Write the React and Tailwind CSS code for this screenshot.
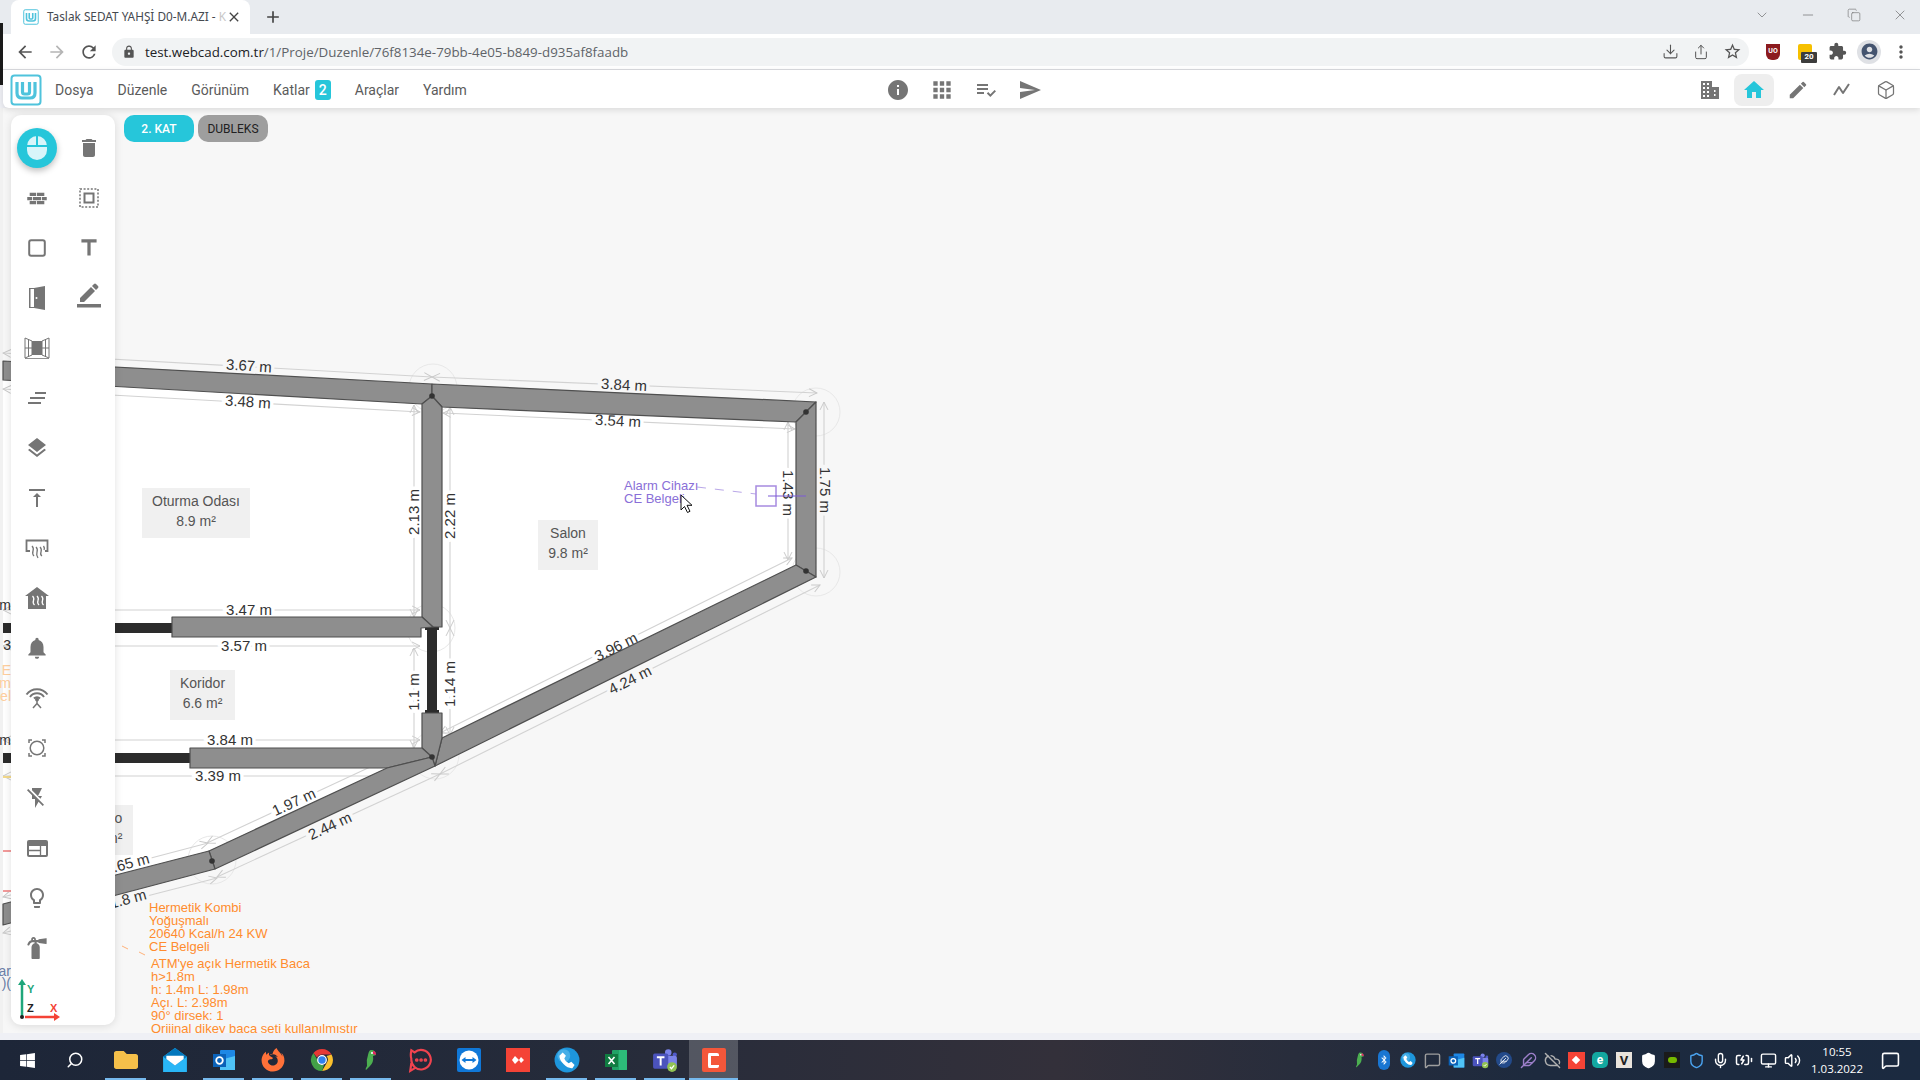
import React from 'react'
import {
  MdDelete, MdTitle, MdLayers, MdVerticalAlignTop, MdNotifications, MdFlashOff,
  MdLightbulbOutline, MdInfo, MdApps, MdPlaylistAddCheck, MdSend, MdHome, MdEdit,
  MdMoreVert, MdStarBorder, MdArrowBack, MdArrowForward, MdRefresh, MdLock, MdClose, MdAdd,
  MdExtension, MdAccountCircle,
} from 'react-icons/md'
import { FaFireExtinguisher, FaWindows, FaBluetoothB, FaSkype, FaFirefoxBrowser, FaFolder } from 'react-icons/fa'
import { Mic, Volume2, BatteryCharging, Monitor, Search, MessageSquare, ChevronDown, Minus, X, Copy, Box, Share, Download, Feather, CloudOff, Shield } from 'lucide-react'

const G = '#757575'

const Logo = ({ size = 32 }) => (
  <svg width={size} height={size} viewBox="0 0 32 32" fill="none">
    <rect x="1.5" y="1.5" width="29" height="29" rx="3" stroke="#4fc3dc" strokeWidth="2" fill="#fff" />
    <path d="M7 8v11q0 5 5 5h8q5 0 5-5V8M12.5 8v10q0 2 2 2h3q2 0 2-2V8" stroke="#4fc3dc" strokeWidth="3.2" />
  </svg>
)

// ---- sidebar icons
const MouseIcon = () => (
  <svg width="22" height="26" viewBox="0 0 22 26">
    <rect x="1" y="1" width="20" height="24" rx="10" fill="#d8f5fa" />
    <path d="M1 11h20M11 1v10" stroke="#26c6da" strokeWidth="2" />
  </svg>
)
const Brick = () => (
  <svg width="24" height="13" viewBox="0 0 24 16" fill={G}>
    <path d="M3 1h8v4H3zM12 1h9v4h-9zM0 6h6v4H0zM7 6h10v4H7zM18 6h6v4h-6zM3 11h8v4H3zM12 11h9v4h-9z" />
  </svg>
)
const SelectBox = () => (
  <svg width="20" height="20" viewBox="0 0 20 20" fill="none">
    <rect x="1" y="1" width="18" height="18" stroke={G} strokeWidth="1.5" strokeDasharray="2 1.6" />
    <rect x="5.5" y="5.5" width="9" height="9" stroke={G} strokeWidth="2" />
  </svg>
)
const Square = () => (
  <svg width="18" height="18" viewBox="0 0 18 18" fill="none">
    <rect x="1.2" y="1.2" width="15.6" height="15.6" rx="2" stroke={G} strokeWidth="2" />
  </svg>
)
const Door = () => (
  <svg width="16" height="24" viewBox="0 0 16 24" fill={G}>
    <path d="M0 2h6v1H1.500v18H6v1H0z" />
    <path d="M5 2l11-2v24L5 22z" />
    <circle cx="7.500" cy="12" r="1" fill="#fff" />
  </svg>
)
const PenLine = () => (
  <svg width="26" height="26" viewBox="0 0 26 26" fill={G} className="mb-[7px]">
    <path d="M4 16L15 5l4 4L8 20H4zM16 4l2-2q1-1 2 0l2 2q1 1 0 2l-2 2z" />
    <rect x="1" y="22" width="24" height="3.500" />
  </svg>
)
const WindowIcon = () => (
  <svg width="26" height="24" viewBox="0 0 26 24" fill="none" stroke={G} strokeWidth="1">
    <path d="M1 2l7 3v14l-7 3zM25 2l-7 3v14l7 3zM4.500 3.500v17M21.500 3.500v17M1 12h7M18 12h7" />
    <rect x="8" y="5" width="10" height="14" fill={G} stroke="none" />
    <path d="M1 22.500h24" strokeWidth="0.8" />
  </svg>
)
const Lines = () => (
  <svg width="20" height="14" viewBox="0 0 20 14" fill="none" stroke={G} strokeWidth="1.800">
    <path d="M8 2h11M3 7h15M1 12h13" />
  </svg>
)
const Radiator = () => (
  <svg width="24" height="22" viewBox="0 0 24 22" fill="none" stroke={G} className="mt-[4px]">
    <path d="M5 12H1.500V1.500h21V12H20" strokeWidth="1.800" />
    <path d="M7 7q2 2 1 5t1 5M11 8q2 2 1 5t1 6M15 8q2 2 1 5t1 4M18.500 7q1.500 2 .5 4" strokeWidth="1.300" />
  </svg>
)
const HeatHouse = () => (
  <svg width="26" height="24" viewBox="0 0 26 24">
    <path d="M13 1L1 10h3v13h18V10h3z" fill={G} />
    <path d="M8.500 10q2 2 1 4.500t1 4.500M13 10q2 2 1 4.500t1 4.500M17.500 10q2 2 1 4.500t1 4.500" fill="none" stroke="#fff" strokeWidth="1.300" />
  </svg>
)
const Antenna = () => (
  <svg width="24" height="24" viewBox="0 0 24 24" fill="none" stroke={G} strokeWidth="2" className="mb-[2px]">
    <path d="M1.500 9.500a13 13 0 0 1 21 0M5 12a8.500 8.500 0 0 1 14 0" />
    <path d="M9 13.500a4 4 0 0 1 6 0" />
    <circle cx="12" cy="14.500" r="2" fill={G} stroke="none" />
    <path d="M12 15v4M12 18.500l-4 4.500M12 18.500l4 4.500" strokeWidth="1.500" />
  </svg>
)
const RingCorners = () => (
  <svg width="18" height="18" viewBox="0 0 18 18" fill="none" stroke={G}>
    <circle cx="9" cy="9" r="6.800" strokeWidth="1.500" />
    <path d="M1 4V1h3M14 1h3v3M17 14v3h-3M4 17H1v-3" strokeWidth="1.500" />
  </svg>
)
const Panel = () => (
  <svg width="21" height="17" viewBox="0 0 21 17">
    <rect width="21" height="17" rx="2" fill={G} />
    <path d="M2 6h17v9H2z" fill="#fff" />
    <path d="M13.500 6v9M2 10.500h11.500" stroke={G} strokeWidth="1.300" />
  </svg>
)

const sideRows = [
  [<MouseIcon />, <MdDelete size={24} color={G} />],
  [<Brick />, <SelectBox />],
  [<Square />, <MdTitle size={26} color={G} />],
  [<Door />, <PenLine />],
  [<WindowIcon />],
  [<Lines />],
  [<MdLayers size={24} color={G} />],
  [<MdVerticalAlignTop size={24} color={G} />],
  [<Radiator />],
  [<HeatHouse />],
  [<MdNotifications size={26} color={G} />],
  [<Antenna />],
  [<RingCorners />],
  [<MdFlashOff size={24} color={G} />],
  [<Panel />],
  [<MdLightbulbOutline size={24} color={G} />],
  [<FaFireExtinguisher size={22} color={G} />],
]

const Sidebar = () => (
  <div className="absolute left-[11px] top-[7px] z-10 flex h-[910px] w-[104px] flex-col rounded-[10px] bg-white pt-[8px] shadow-[0_1px_8px_rgba(0,0,0,0.12)]">
    {sideRows.map((row, i) => (
      <div key={i} className="grid h-[50px] w-full shrink-0 grid-cols-[52px_52px] items-center">
        {row.map((icon, k) => (
          <div
            key={k}
            className={i === 0 && k === 0
              ? 'ml-[6px] flex h-10 w-10 items-center justify-center rounded-full bg-[#26c6da] shadow-[0_3px_6px_rgba(0,0,0,0.25)]'
              : 'flex items-center justify-center'}
          >
            {icon}
          </div>
        ))}
      </div>
    ))}
    <svg width="60" height="50" viewBox="0 0 60 50" className="mt-auto mb-[1px] ml-[3px] font-['Liberation_Sans',sans-serif]">
      <path d="M8 43V8" stroke="#1fa67a" strokeWidth="2.500" />
      <path d="M4 11l4-6 4 6z" fill="#1fa67a" />
      <path d="M11 43h30" stroke="#f44336" strokeWidth="2.500" />
      <path d="M40 39l6 4-6 4z" fill="#f44336" />
      <circle cx="8" cy="43" r="2" fill="#222" />
      <text x="13" y="19" fontSize="11" fontWeight="700" fill="#1fa67a">Y</text>
      <text x="13" y="38" fontSize="11" fontWeight="700" fill="#222">Z</text>
      <text x="36" y="38" fontSize="11" fontWeight="700" fill="#f44336">X</text>
    </svg>
  </div>
)

// ---- floor plan data
const walls = [
  '3,361 432,384 432,396 422,404 3,380',
  '432,384 816,402 796,422 442,407 432,396',
  '816,402 816,577 796,565 796,422',
  '816,577 435,766 442,738 796,565',
  '422,404 432,396 442,407 442,627 433,627 422,617',
  '172,617 422,617 433,627 421,628 421,637 172,637',
  '422,713 442,713 442,738 435,766 432,757 422,748',
  '190,748 422,748 432,757 387,768 190,768',
  '435,766 215,869 209,851 387,768 432,757',
  '215,869 3,925 3,904 209,851',
]
const dimLines = [
  [3, 353, 432, 377], [432, 377, 817, 393], [3, 389, 420, 412], [443, 413, 795, 429],
  [414, 405, 414, 617], [450, 407, 450, 628], [788, 422, 788, 560], [824, 402, 824, 578],
  [3, 610, 420, 610], [3, 646, 420, 646], [3, 740, 420, 740], [3, 776, 387, 776],
  [414, 648, 414, 748], [450, 628, 450, 735], [792, 558, 440, 733], [820, 585, 440, 774],
  [383, 761, 207, 843], [440, 774, 217, 877], [208, 843, 3, 897], [217, 878, 3, 933],
]
const dims = [
  ['3.67 m', 249, 366, 3.5, '#f7f7f7'], ['3.48 m', 248, 402, 3.5, '#fff'],
  ['3.84 m', 624, 385, 3, '#f7f7f7'], ['3.54 m', 618, 421, 3, '#fff'],
  ['2.13 m', 414, 512, -90, '#fff'], ['2.22 m', 450, 516, -90, '#fff'],
  ['1.43 m', 788, 493, 90, '#fff'], ['1.75 m', 825, 490, 90, '#f7f7f7'],
  ['3.47 m', 249, 610, 0, '#fff'], ['3.57 m', 244, 646, 0, '#fff'],
  ['3.84 m', 230, 740, 0, '#fff'], ['3.39 m', 218, 776, 0, '#fff'],
  ['1.1 m', 414, 692, -90, '#fff'], ['1.14 m', 450, 684, -90, '#fff'],
  ['3.96 m', 616, 647, -26.500, '#fff'], ['4.24 m', 630, 680, -26.500, '#f7f7f7'],
  ['1.97 m', 294, 802, -25, '#fff'], ['2.44 m', 330, 826, -25, '#f7f7f7'],
  ['1.65 m', 127, 864, -15, '#fff'], ['1.8 m', 128, 899, -15, '#f7f7f7'],
]
const rooms = [
  [142, 488, 108, 50, 'Oturma Odası', '8.9 m²'],
  [538, 520, 60, 50, 'Salon', '9.8 m²'],
  [170, 670, 65, 50, 'Koridor', '6.6 m²'],
  [72, 805, 61, 50, 'Banyo', '3.6 m²'],
]
const joints = [[432, 396], [806, 412], [806, 571], [432, 757], [212, 861]]
const kombi = ['Hermetik Kombi', 'Yoğuşmalı', '20640 Kcal/h 24 KW', 'CE Belgeli']
const baca = ["ATM'ye açık Hermetik Baca", 'h>1.8m', 'h: 1.4m L: 1.98m', 'Açı. L: 2.98m', '90° dirsek: 1', 'Orijinal dikey baca seti kullanılmıştır']
// bits of the drawing that stick out left of the tool panel
const leftBits = [
  ['m', 610, '#333'], ['3', 650, '#333'], ['E', 675, '#ffcf9e'], ['m', 688, '#ffcf9e'], ['el', 701, '#ffcf9e'],
  ['m', 745, '#333'], ['ar', 976, '#6b7fa8'], [')(', 988, '#6b7fa8'],
]

const Plan = () => (
  <svg
    width="1920"
    height="925"
    viewBox="0 108 1920 925"
    className="absolute inset-0 font-['Liberation_Sans',sans-serif]"
  >
    <defs>
      <marker id="tip" viewBox="0 0 10 10" refX="9" refY="5" markerWidth="9" markerHeight="9" orient="auto-start-reverse">
        <path d="M1 1l8 4-8 4" fill="none" stroke="#c9c9c9" strokeWidth="1" />
      </marker>
    </defs>
    <polygon points="3,370 432,390 806,412 806,570 435,760 212,860 3,915" fill="#fff" />
    <rect x="0" y="108" width="3" height="925" fill="#f1f1f1" />
    {[[433, 388], [816, 412], [816, 572], [431, 628], [435, 755], [212, 860]].map(([cx, cy], i) => (
      <circle key={i} cx={cx} cy={cy} r="24" fill="none" stroke="#e8e8e8" />
    ))}
    {dimLines.map(([x1, y1, x2, y2], i) => (
      <line key={i} x1={x1} y1={y1} x2={x2} y2={y2} stroke="#d2d2d2" strokeWidth="1.100" markerStart="url(#tip)" markerEnd="url(#tip)" />
    ))}
    {/* halos break the measure lines, the walls then paint over them */}
    {dims.map(([t, x, y, r, bg], i) => (
      <text key={i} x={x} y={y} dy="5" fontSize="15" textAnchor="middle" transform={`rotate(${r} ${x} ${y})`} fill={bg} stroke={bg} strokeWidth="7">
        {t}
      </text>
    ))}
    <rect x="3" y="623" width="169" height="10" fill="#2c2c2c" />
    <rect x="3" y="753" width="187" height="10" fill="#2c2c2c" />
    <rect x="427" y="628" width="10" height="85" fill="#2c2c2c" />
    <rect x="425" y="627" width="14" height="3" fill="#2c2c2c" />
    <rect x="425" y="710" width="14" height="3" fill="#2c2c2c" />
    {walls.map((p, i) => (
      <polygon key={i} points={p} fill="#8e8e8e" stroke="#4f4f4f" strokeWidth="1.200" strokeLinejoin="round" />
    ))}
    {joints.map(([cx, cy], i) => (
      <circle key={i} cx={cx} cy={cy} r="2.800" fill="#333" />
    ))}
    {dims.map(([t, x, y, r], i) => (
      <text key={i} x={x} y={y} dy="5" fontSize="15" fill="#333" textAnchor="middle" transform={`rotate(${r} ${x} ${y})`}>
        {t}
      </text>
    ))}
    {rooms.map(([x, y, w, h, a, b], i) => (
      <g key={i}>
        <rect x={x} y={y} width={w} height={h} fill="#f0f0f0" />
        <text x={x + w / 2} y={y + 18} fontSize="14" fill="#555" textAnchor="middle">{a}</text>
        <text x={x + w / 2} y={y + 38} fontSize="14" fill="#555" textAnchor="middle">{b}</text>
      </g>
    ))}
    {/* alarm */}
    <text x="624" y="490" fontSize="13" fill="#8a6fd8">Alarm Cihazı</text>
    <text x="624" y="503" fontSize="13" fill="#8a6fd8">CE Belgeli</text>
    <line x1="697" y1="487" x2="756" y2="494" stroke="#b9a7e8" strokeDasharray="9 9" />
    <rect x="756" y="486" width="20" height="20" fill="none" stroke="#a78be0" strokeWidth="1.500" />
    <line x1="768" y1="496" x2="806" y2="496" stroke="#7c5bd6" strokeWidth="1.200" />
    <path d="M681 495v15l3.500-3.500 3 6 2.500-1.200-3-6h5z" fill="#fff" stroke="#111" strokeWidth="1" />
    {/* kombi */}
    {kombi.map((t, i) => (
      <text key={i} x="149" y={912 + i * 13} fontSize="13" fill="#ff8c2e">{t}</text>
    ))}
    {baca.map((t, i) => (
      <text key={i} x="151" y={968 + i * 13} fontSize="13" fill="#ff8c2e">{t}</text>
    ))}
    <path d="M122 946l6 3M139 952l6 3" stroke="#ffb27a" strokeWidth="1" />
    {leftBits.map(([t, y, c], i) => (
      <text key={i} x="11" y={y} fontSize="14" fill={c} textAnchor="end">{t}</text>
    ))}
    <rect x="3" y="776" width="8" height="2" fill="#f3d98b" />
    <rect x="3" y="850" width="8" height="2" fill="#f29a9a" />
    <rect x="3" y="890" width="8" height="2" fill="#f29a9a" />
  </svg>
)

// ---- taskbar icons
const Tile = ({ bg, children }) => (
  <div className={`flex h-6 w-6 items-center justify-center ${bg}`}>{children}</div>
)
const Chrome = () => (
  <svg width="24" height="24" viewBox="0 0 24 24">
    <path d="M12 1a11 11 0 0 1 9.500 5.500H12a5.500 5.500 0 0 0-5 3L3.500 5A11 11 0 0 1 12 1z" fill="#e53935" />
    <path d="M21.500 6.500A11 11 0 0 1 12 23l4.800-8.300A5.500 5.500 0 0 0 16.500 8z" fill="#fbc02d" />
    <path d="M3.500 5L8 13a5.500 5.500 0 0 0 6 4l-2 6A11 11 0 0 1 3.500 5z" fill="#43a047" />
    <circle cx="12" cy="12" r="4.300" fill="#2f80ed" stroke="#fff" strokeWidth="1.200" />
  </svg>
)
const Parrot = ({ s = 24 }) => (
  <svg width={s} height={s} viewBox="0 0 24 24">
    <path d="M12 2q5 0 5 5l-3 1q1 6-3 10l-4 4q-1-1 1-4-1-6 1-11 1-5 3-5z" fill="#4caf50" />
    <path d="M14 3q3 0 3 4l-3-1z" fill="#e91e63" />
    <circle cx="13" cy="5" r="1" fill="#fff" />
  </svg>
)
const TeamsIcon = ({ s = 24 }) => (
  <svg width={s} height={s} viewBox="0 0 24 24">
    <circle cx="15" cy="5" r="3" fill="#7b83eb" />
    <circle cx="21" cy="7" r="2" fill="#5059c9" />
    <rect x="11" y="8" width="12" height="11" rx="2" fill="#7b83eb" />
    <rect x="1" y="6" width="14" height="14" rx="1.500" fill="#4b53bc" />
    <path d="M4.500 9.500h7M8 9.500v7.500" stroke="#fff" strokeWidth="1.800" />
    <circle cx="18.500" cy="18.500" r="4.500" fill="#92c353" />
    <path d="M16.500 18.500l1.500 1.500 2.500-3" stroke="#fff" fill="none" strokeWidth="1.200" />
  </svg>
)
const OutlookIcon = ({ s = 24 }) => (
  <svg width={s} height={s} viewBox="0 0 24 24">
    <rect x="8" y="2" width="15" height="20" rx="1" fill="#1e88e5" />
    <path d="M8 12l15-4v14H8z" fill="#4fc3f7" />
    <rect x="1" y="6" width="13" height="13" fill="#0b62b8" />
    <circle cx="7.500" cy="12.500" r="3.300" fill="none" stroke="#fff" strokeWidth="1.800" />
  </svg>
)
const AnyDesk = () => (
  <Tile bg="bg-[#f44336]">
    <svg width="14" height="14" viewBox="0 0 14 14" fill="#fff">
      <path d="M4 3l4 4-4 4-3-4zM10 4l3 3-3 3-2-3z" />
    </svg>
  </Tile>
)
const Phone = ({ s, i }) => (
  <svg width={s} height={s} viewBox="0 0 24 24">
    <circle cx="12" cy="12" r="11.500" fill="#1e96dc" />
    <circle cx="9" cy="8" r="6" fill="#6ec6f2" opacity="0.500" />
    <path d={i} fill="#fff" />
  </svg>
)
const phonePath = 'M8 5l3 3-1.500 2.500q1 3 4 4.500L16 13.500l3 3-2 3q-4 .5-8-3.500T5 8z'

const apps = [
  { el: <FaFolder size={24} color="#f5c04a" />, run: true },
  {
    el: (
      <svg width="26" height="26" viewBox="0 0 24 24">
        <path d="M1 9l11-8 11 8v14H1z" fill="#29b6f6" />
        <path d="M1 9l11 8 11-8-11-8z" fill="#0277bd" />
        <path d="M4 8h16v3l-8 6-8-6z" fill="#fff" />
      </svg>
    ),
  },
  { el: <OutlookIcon />, run: true },
  { el: <FaFirefoxBrowser size={24} color="#ff7139" />, run: true },
  { el: <Chrome />, run: true },
  { el: <Parrot />, run: true },
  {
    el: (
      <svg width="26" height="26" viewBox="0 0 24 24" fill="none" stroke="#f0434f" strokeWidth="2">
        <path d="M4 3q-1 5 0 8a9 9 0 1 0 3-6zM4 15l-1 7 5-3" />
        <circle cx="9" cy="12" r="0.700" fill="#f0434f" />
        <circle cx="13" cy="12" r="0.700" fill="#f0434f" />
        <circle cx="17" cy="12" r="0.700" fill="#f0434f" />
      </svg>
    ),
  },
  {
    el: (
      <Tile bg="rounded-[2px] bg-[#1078d8]">
        <svg width="20" height="20" viewBox="0 0 20 20">
          <circle cx="10" cy="10" r="9.500" fill="#fff" />
          <path d="M2.500 10l4-3v2h7V7l4 3-4 3v-2h-7v2z" fill="#1078d8" />
        </svg>
      </Tile>
    ),
  },
  { el: <AnyDesk /> },
  { el: <Phone s={26} i={phonePath} />, run: true },
  {
    el: (
      <svg width="24" height="24" viewBox="0 0 24 24">
        <rect x="8" y="2" width="15" height="20" rx="1" fill="#21a366" />
        <path d="M15 2h8v10h-8zM15 12h8v10h-8z" fill="#33c481" opacity="0.700" />
        <rect x="1" y="6" width="13" height="13" fill="#107c41" />
        <path d="M4.500 9l6 7M10.500 9l-6 7" stroke="#fff" strokeWidth="1.600" />
      </svg>
    ),
    run: true,
  },
  { el: <TeamsIcon s={26} />, run: true },
  {
    el: (
      <div className="flex h-6 w-6 items-center justify-center rounded-[2px] bg-[#f4573a]">
        <div className="h-[15px] w-[11px] rounded-[2px] border-[3px] border-r-0 border-white" />
      </div>
    ),
    run: true,
    active: true,
  },
]

const tray = [
  <Parrot s={18} />,
  <div className="flex h-[20px] w-[12px] items-center justify-center rounded-[6px] bg-[#1976d2]"><FaBluetoothB size={10} color="#fff" /></div>,
  <Phone s={16} i={phonePath} />,
  <MessageSquare size={17} color="#9e9e9e" />,
  <OutlookIcon s={17} />,
  <TeamsIcon s={17} />,
  <div className="flex h-4 w-4 items-center justify-center rounded-full bg-[#234a8a]"><Feather size={10} color="#fff" /></div>,
  <Feather size={17} color="#9c7fc9" />,
  <CloudOff size={17} color="#b0b0b0" />,
  <div className="flex h-[17px] w-[17px] items-center justify-center bg-[#f44336]"><div className="h-[6px] w-[6px] rotate-45 bg-white" /></div>,
  <div className="flex h-4 w-4 items-center justify-center rounded-[5px] bg-[#13a7a0] text-[12px] font-bold leading-none text-white">e</div>,
  <div className="flex h-4 w-4 items-center justify-center bg-[#e9e3dc] text-[13px] font-bold leading-none text-[#222]">V</div>,
  <Shield size={17} color="#fff" fill="#fff" />,
  <div className="flex h-4 w-4 items-center justify-center bg-[#1a1a1a]"><div className="h-[6px] w-[9px] rounded-full bg-[#76b900]" /></div>,
  <Shield size={17} color="#4aa3f0" />,
  <Mic size={17} color="#fff" />,
  <BatteryCharging size={18} color="#fff" />,
  <Monitor size={17} color="#fff" />,
  <Volume2 size={17} color="#fff" />,
]

const Taskbar = () => (
  <div className="flex h-10 shrink-0 items-stretch bg-[linear-gradient(90deg,#1d2638_0%,#252b3a_30%,#33303a_55%,#1d2a3e_80%,#1b2a40_100%)]">
    <div className="flex w-[54px] items-center justify-center"><FaWindows size={17} color="#fff" /></div>
    <div className="flex w-[42px] items-center justify-center"><Search size={18} color="#fff" className="-scale-x-100" /></div>
    <div className="ml-[5px] flex">
      {apps.map((a, i) => (
        <div key={i} className={`relative flex w-[49px] items-center justify-center ${a.active ? 'bg-white/20' : ''}`}>
          {a.el}
          {a.run && <div className={`absolute bottom-0 h-[2px] bg-[#76b9ed] ${a.active ? 'inset-x-0' : 'inset-x-1'}`} />}
        </div>
      ))}
    </div>
    <div className="ml-auto flex items-center">
      {tray.map((t, i) => (
        <div key={i} className="flex w-6 items-center justify-center">{t}</div>
      ))}
      <div className="flex w-[66px] flex-col items-center text-[11.500px] leading-[17px] text-white font-['Open_Sans',sans-serif]">
        <span>10:55</span>
        <span>1.03.2022</span>
      </div>
      <div className="flex w-10 items-center justify-center"><MessageSquare size={19} color="#fff" /></div>
      <div className="w-[10px]" />
    </div>
  </div>
)

const BarIcon = ({ children, active }) => (
  <div className={`flex h-8 w-10 items-center justify-center rounded-lg ${active ? 'bg-[#eeeeee]' : ''}`}>{children}</div>
)

const Building = () => (
  <svg width="20" height="20" viewBox="0 0 20 20" fill={G}>
    <path d="M1 1h11v18H1zM12 7h7v12h-7z" />
    <path d="M3 3h2v2H3zM7 3h2v2H7zM3 7h2v2H3zM7 7h2v2H7zM3 11h2v2H3zM7 11h2v2H7zM3 15h2v2H3zM7 15h2v2H7zM14 10h1.500v2H14zM14 14h1.500v2H14z" fill="#fff" />
  </svg>
)
const Trend = () => (
  <svg width="20" height="20" viewBox="0 0 20 20" fill="none" stroke={G} strokeWidth="2" strokeLinejoin="round">
    <path d="M2 15l5-8 4 6 6-9" />
  </svg>
)

const Slot = ({ children }) => <div className="flex w-8 items-center justify-center">{children}</div>

export default function App() {
  return (
    <div className="flex h-[1080px] w-[1920px] flex-col overflow-hidden bg-[#eff0f5] font-['Roboto',sans-serif]">
      <div className="absolute left-0 top-[23px] z-30 h-[62px] w-[3px] bg-[#1a1a1a]" />
      {/* tab strip */}
      <div className="relative flex h-[34px] shrink-0 items-end bg-[#e8ebef] pl-[11px]">
        <div className="flex h-[34px] w-[239px] items-center rounded-t-lg bg-white pl-3 pr-2 text-[11.800px] text-[#45494f] font-['Noto_Sans',sans-serif]">
          <Logo size={16} />
          <span className="ml-2 whitespace-nowrap">Taslak SEDAT YAHŞİ D0-M.AZI - <span className="text-[#c8c8c8]">K</span></span>
          <MdClose size={16} color="#444" className="ml-auto" />
        </div>
        <div className="ml-[13px] flex h-[34px] items-center"><MdAdd size={20} color="#444" /></div>
        <div className="ml-auto mr-[12px] flex h-full items-start gap-[30px] pt-[7px] text-[#666]">
          <ChevronDown size={16} strokeWidth={1} />
          <Minus size={16} strokeWidth={1} />
          <Copy size={16} strokeWidth={1} className="p-[1px]" />
          <X size={16} strokeWidth={1} />
        </div>
      </div>
      {/* address bar */}
      <div className="flex h-[36px] shrink-0 items-center border-b border-[#dadce0] bg-white pl-[15px] pr-[3px]">
        <MdArrowBack size={20} color="#555" />
        <MdArrowForward size={20} color="#b5b5b5" className="ml-[12px]" />
        <MdRefresh size={20} color="#555" className="ml-[12px]" />
        <div className="ml-[13px] flex h-7 w-[1637px] items-center rounded-full bg-[#f1f3f4] pl-[10px] pr-[7px] font-['Open_Sans',sans-serif]">
          <MdLock size={14} color="#555" />
          <span className="ml-[9px] whitespace-nowrap pt-[2px] text-[13.350px] text-[#202124]">test.webcad.com.tr<span className="text-[#5f6368]">/1/Proje/Duzenle/76f8134e-79bb-4e05-b849-d935af8faadb</span></span>
          <div className="ml-auto flex items-center gap-[14px] text-[#555]">
            <Download size={17} strokeWidth={1.500} />
            <Share size={16} strokeWidth={1.500} />
            <MdStarBorder size={19} />
          </div>
        </div>
        <div className="ml-[8px] flex items-center">
          <Slot><div className="flex h-4 w-[14px] items-center justify-center rounded-b-md bg-[#8c1b1f] text-[7px] font-bold text-white">UO</div></Slot>
          <Slot>
            <div className="relative h-4 w-[14px] rounded-[2px] bg-[#f6c000]">
              <div className="absolute left-[3px] top-[8px] flex h-[11px] w-[16px] items-center justify-center rounded-[1px] bg-[#3c3c3c] text-[8px] font-bold text-white">20</div>
            </div>
          </Slot>
          <Slot><MdExtension size={19} color="#555" /></Slot>
          <Slot><div className="flex h-6 w-6 items-center justify-center rounded-full bg-[#dfe1e5]"><MdAccountCircle size={19} color="#44546f" /></div></Slot>
          <Slot><MdMoreVert size={20} color="#555" /></Slot>
        </div>
      </div>
      {/* app menu bar */}
      <div className="relative z-20 ml-[3px] flex h-[38px] shrink-0 items-center rounded-bl-[6px] bg-white pl-[7px] pt-[2px] text-[14px] text-[#5b5b5b] shadow-[0_2px_6px_rgba(0,0,0,0.12)]">
        <Logo />
        <div className="ml-[13px] flex items-center gap-6">
          <span>Dosya</span>
          <span>Düzenle</span>
          <span>Görünüm</span>
          <span className="flex items-center gap-[5px]">
            Katlar
            <span className="flex h-5 w-4 items-center justify-center rounded-[3px] bg-[#26c6da] font-medium text-white">2</span>
          </span>
          <span>Araçlar</span>
          <span>Yardım</span>
        </div>
        <div className="ml-[411px] flex items-center gap-[4px]">
          <BarIcon><MdInfo size={24} color={G} /></BarIcon>
          <BarIcon><MdApps size={26} color={G} /></BarIcon>
          <BarIcon><MdPlaylistAddCheck size={24} color={G} /></BarIcon>
          <BarIcon><MdSend size={24} color={G} /></BarIcon>
        </div>
        <div className="ml-auto mr-[14px] flex items-center gap-[4px]">
          <BarIcon><Building /></BarIcon>
          <BarIcon active><MdHome size={24} color="#26c6da" /></BarIcon>
          <BarIcon><MdEdit size={22} color={G} /></BarIcon>
          <BarIcon><Trend /></BarIcon>
          <BarIcon><Box size={20} color={G} strokeWidth={1.500} /></BarIcon>
        </div>
      </div>
      {/* canvas */}
      <div className="relative h-[925px] shrink-0 overflow-hidden bg-[#f7f7f7]">
        <Plan />
        <Sidebar />
        <div className="absolute left-[124px] top-[7px] z-10 flex gap-1 text-[12px]">
          <div className="flex h-[27px] w-[70px] items-center justify-center rounded-[10px] bg-[#26c6da] font-medium text-white">2. KAT</div>
          <div className="flex h-[27px] w-[70px] items-center justify-center rounded-[10px] bg-[#9e9e9e] text-[#212121]">DUBLEKS</div>
        </div>
      </div>
      <div className="flex-1" />
      <Taskbar />
    </div>
  )
}
